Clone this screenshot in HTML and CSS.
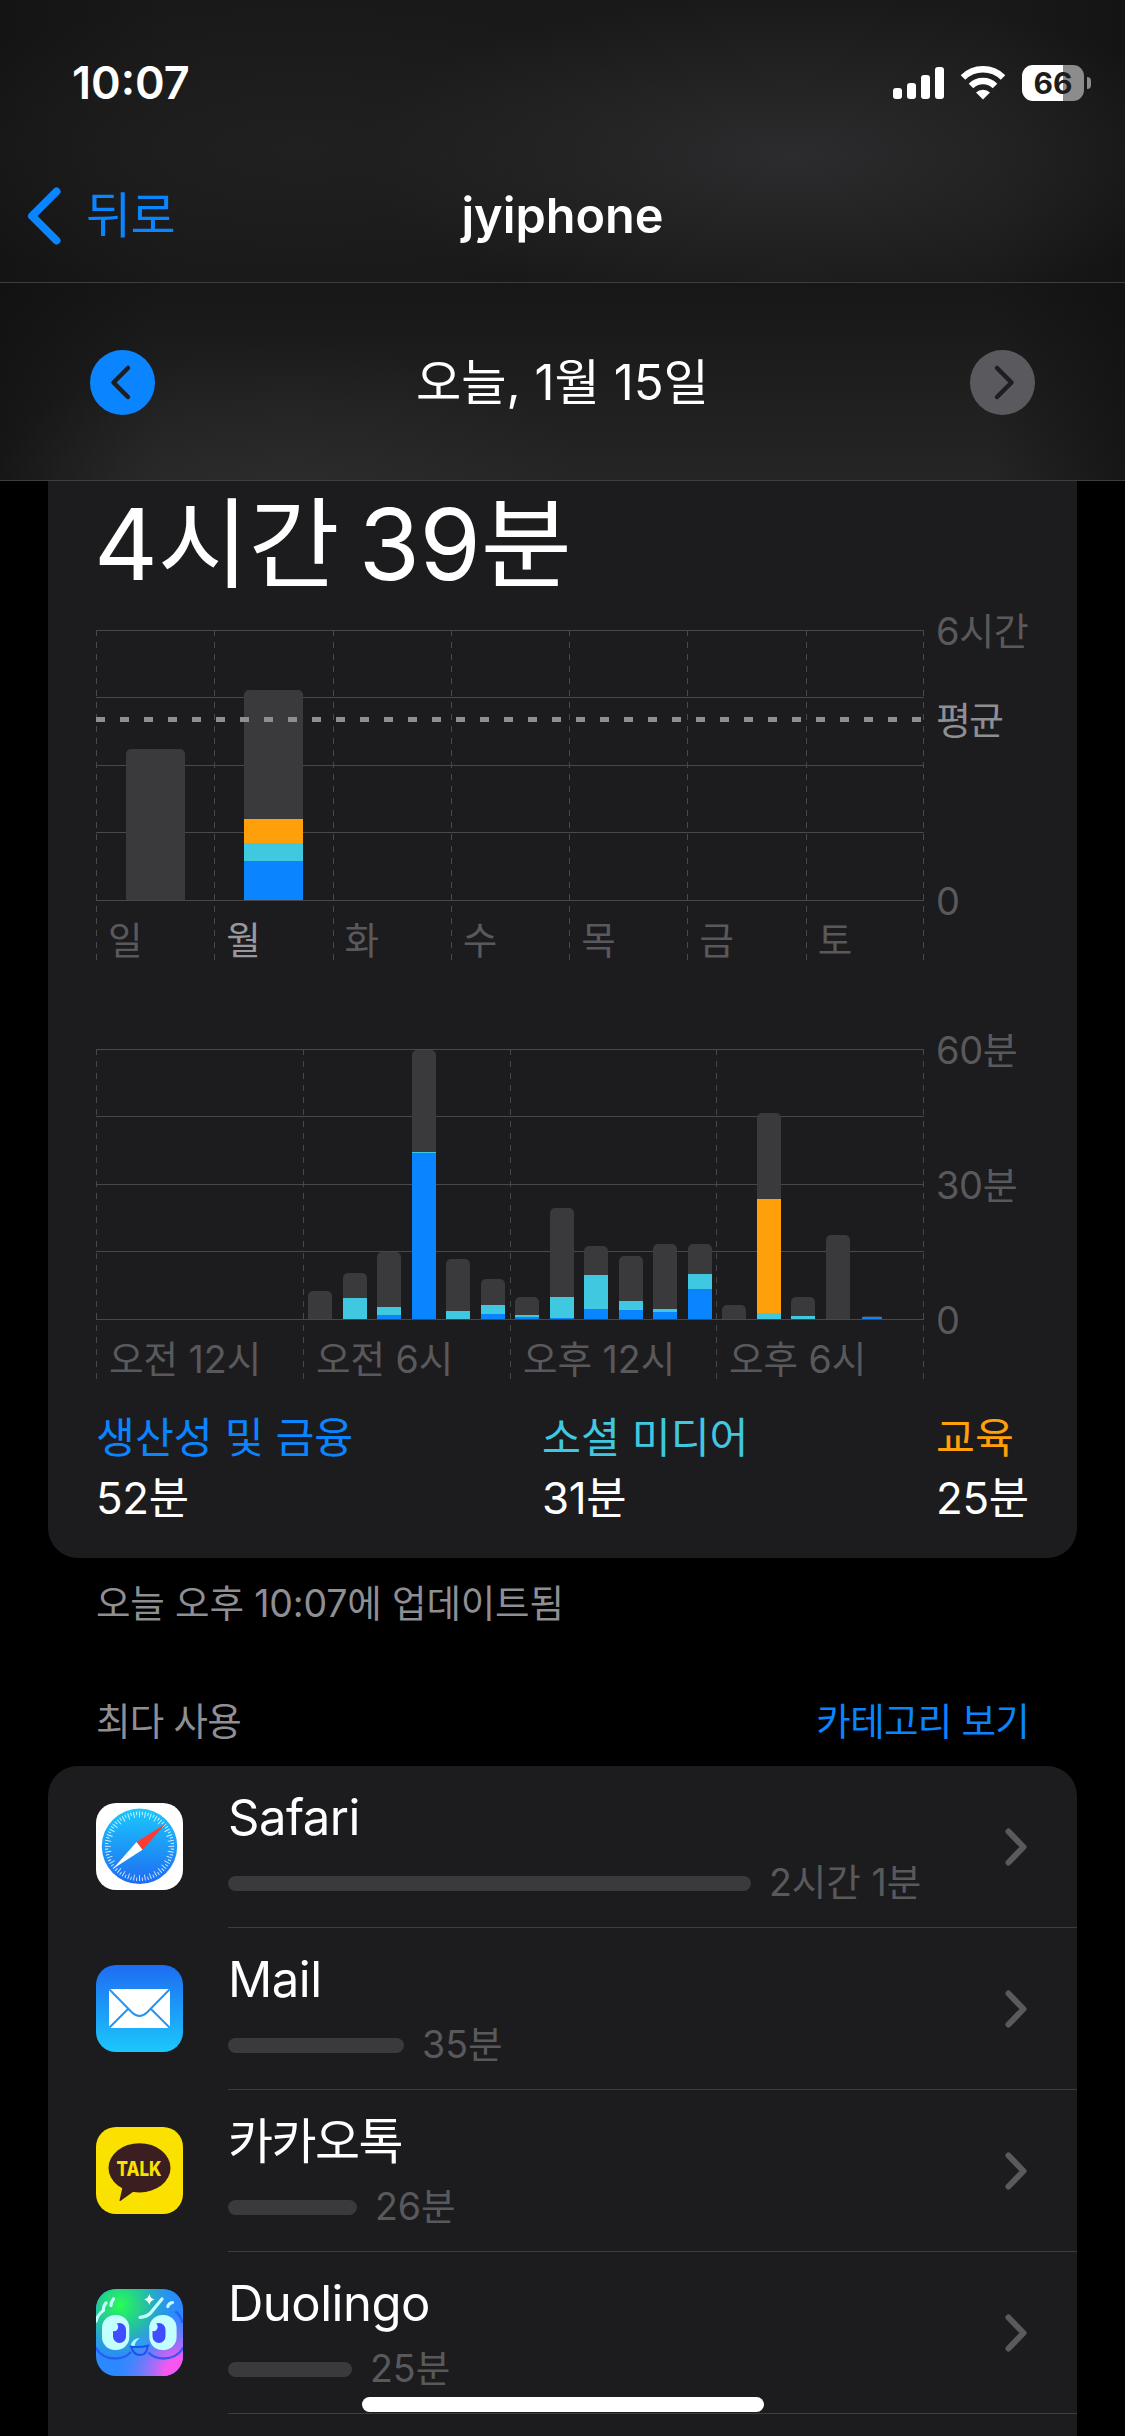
FILE: index.html
```html
<!DOCTYPE html>
<html lang="ko">
<head>
    <meta charset="UTF-8">
    <meta name="viewport" content="width=device-width, initial-scale=1.0">
    <title>jyiphone</title>
    <link rel="stylesheet" href="styles.css">
</head>
<body>
    <header class="top-bar">
        <div class="status-bar">
            <span class="time">10:07</span>
            <div class="status-icons">
                <div class="signal"><i></i><i></i><i></i><i></i></div>
                <svg class="wifi" width="46" height="34" viewBox="0 0 46 34" fill="none" stroke="#fff">
                    <path d="M3 11.5a28.5 28.5 0 0 1 40 0" stroke-width="6.5"/>
                    <path d="M11 20a17.2 17.2 0 0 1 24 0" stroke-width="6.5"/>
                    <path d="M23 33.5l-7-7a10 10 0 0 1 14 0z" fill="#fff" stroke="none"/>
                </svg>
                <div class="battery">66</div>
            </div>
        </div>
        <nav class="nav">
            <a class="back">
                <svg width="36" height="60" viewBox="0 0 36 60"><path d="M29.500 5.500L5 30l24.500 24.500"/></svg>
                <span>뒤로</span>
            </a>
            <h1>jyiphone</h1>
        </nav>
    </header>

    <div class="date-bar">
        <button class="arrow prev"><svg width="65" height="65" viewBox="0 0 65 65"><path d="M38 18L23.500 32.500L38 47"/></svg></button>
        <span>오늘, 1월 15일</span>
        <button class="arrow next"><svg width="65" height="65" viewBox="0 0 65 65"><path d="M27 18L41.500 32.500L27 47"/></svg></button>
    </div>

    <main>
        <section class="card usage">
            <h2>4시간 39분</h2>

            <div class="chart week">
                <div class="plot">
                    <div class="columns">
                        <span>일</span><span class="today">월</span><span>화</span><span>수</span><span>목</span><span>금</span><span>토</span>
                    </div>
                    <div class="bars" id="week-bars"></div>
                    <div class="average"></div>
                </div>
                <div class="y-axis"><span>6시간</span><span class="avg-label">평균</span><span>0</span></div>
            </div>

            <div class="chart day">
                <div class="plot">
                    <div class="columns">
                        <span>오전 12시</span><span>오전 6시</span><span>오후 12시</span><span>오후 6시</span>
                    </div>
                    <div class="bars" id="day-bars"></div>
                </div>
                <div class="y-axis"><span>60분</span><span>30분</span><span>0</span></div>
            </div>

            <div class="legend">
                <div><span class="productivity">생산성 및 금융</span><b>52분</b></div>
                <div><span class="social">소셜 미디어</span><b>31분</b></div>
                <div><span class="education">교육</span><b>25분</b></div>
            </div>
        </section>
        <p class="updated">오늘 오후 10:07에 업데이트됨</p>

        <div class="list-header"><span>최다 사용</span><a>카테고리 보기</a></div>

        <section class="card app-list">
            <div class="app">
                <svg class="icon" viewBox="0 0 87 87">
                    <defs>
                        <linearGradient id="safari" x2="0" y2="1"><stop stop-color="#1bc8fc"/><stop offset="1" stop-color="#1e6cf2"/></linearGradient>
                    </defs>
                    <rect width="87" height="87" rx="20" fill="#fff"/>
                    <circle cx="43.500" cy="43.300" r="37.700" fill="url(#safari)"/>
                    <g fill="none" stroke="#fff" stroke-opacity=".85">
                        <circle cx="43.500" cy="43.300" r="31.700" stroke-width="6" pathLength="360" stroke-dasharray="1.6 8.400" stroke-dashoffset=".8"/>
                        <circle cx="43.500" cy="43.300" r="33" stroke-width="3.400" pathLength="360" stroke-dasharray="1.6 8.400" stroke-dashoffset="5.800"/>
                    </g>
                    <path d="M70 20.500L40.500 39l6 7.700z" fill="#ff3b30"/>
                    <path d="M17 65.700L40.500 39l6 7.700z" fill="#fff"/>
                </svg>
                <div class="info">
                    <div class="name">Safari</div>
                    <div class="meter"><i style="width: 523px"></i>2시간 1분</div>
                </div>
                <svg class="chevron" viewBox="0 0 22 38"><path d="M3.500 3.500L18.500 19l-15 15.500"/></svg>
            </div>
            <div class="app">
                <svg class="icon" viewBox="0 0 87 87">
                    <defs>
                        <linearGradient id="mail" x2="0" y2="1"><stop stop-color="#1e6cf2"/><stop offset="1" stop-color="#1bc8fc"/></linearGradient>
                    </defs>
                    <rect width="87" height="87" rx="20" fill="url(#mail)"/>
                    <rect x="13" y="24" width="61" height="39" rx="2" fill="#fff"/>
                    <g fill="none" stroke="#2196f7" stroke-width="2">
                        <path d="M13.500 24.500L36 47.500q7.500 7 15 0L73.500 24.500"/>
                        <path d="M13.500 62.500L32 44M73.500 62.500L55 44"/>
                    </g>
                </svg>
                <div class="info">
                    <div class="name">Mail</div>
                    <div class="meter"><i style="width: 176px"></i>35분</div>
                </div>
                <svg class="chevron" viewBox="0 0 22 38"><path d="M3.500 3.500L18.500 19l-15 15.500"/></svg>
            </div>
            <div class="app">
                <svg class="icon" viewBox="0 0 87 87">
                    <rect width="87" height="87" rx="20" fill="#fae100"/>
                    <ellipse cx="43.500" cy="40.800" rx="31" ry="24.600" fill="#3b1e20"/>
                    <path d="M27 58l-3.500 15.500q0 1 1.200.3L39 63.500z" fill="#3b1e20"/>
                    <text class="talk" x="43" y="48.800" textLength="45" lengthAdjust="spacingAndGlyphs">TALK</text>
                </svg>
                <div class="info">
                    <div class="name korean">카카오톡</div>
                    <div class="meter"><i style="width: 129px"></i>26분</div>
                </div>
                <svg class="chevron" viewBox="0 0 22 38"><path d="M3.500 3.500L18.500 19l-15 15.500"/></svg>
            </div>
            <div class="app">
                <svg class="icon" viewBox="0 0 87 87">
                    <defs>
                        <clipPath id="duo-clip"><rect width="87" height="87" rx="20"/></clipPath>
                        <radialGradient id="duo-green" gradientUnits="userSpaceOnUse" cx="24" cy="16" r="62"><stop stop-color="#26ff50"/><stop offset=".45" stop-color="#24c894" stop-opacity=".85"/><stop offset="1" stop-color="#2490ff" stop-opacity="0"/></radialGradient>
                        <radialGradient id="duo-pink" gradientUnits="userSpaceOnUse" cx="84" cy="84" r="62"><stop stop-color="#ff52ee"/><stop offset=".25" stop-color="#f458f0"/><stop offset="1" stop-color="#6a80ff" stop-opacity="0"/></radialGradient>
                    </defs>
                    <g clip-path="url(#duo-clip)" fill="none" stroke-linecap="round" stroke-linejoin="round">
                        <rect width="87" height="87" fill="#2c88ff"/>
                        <rect width="87" height="87" fill="url(#duo-pink)"/>
                        <rect width="87" height="87" fill="url(#duo-green)"/>
                        <g stroke="#c4ffff" stroke-width="3.200">
                            <path d="M10 14q-3 3-2.500 7.500Q2 25 0 32M17.500 10q-2.500 3-2.500 6.500"/>
                            <path d="M66 10L54.500 24q-4 4-10.500 4.300M76.500 13.500q-3.500.5-4.700 4"/>
                        </g>
                        <path d="M53.300 5q1 4.500 5.200 5.500-4.200 1-5.200 5.500-1-4.500-5.200-5.500 4.200-1 5.200-5.500z" fill="#fff"/>
                        <path d="M80 23q5 4 6 10" stroke="#2a62f5" stroke-width="2.500"/>
                        <path d="M0 59q6 10.500 19 10.500 10 0 15.500-6M53 64q5 5.500 15 5.500 13-.5 19-10.500" stroke="#2a5cf5" stroke-width="2.300"/>
                        <rect x="6" y="26" width="27.300" height="35" rx="13" fill="#c4ffff"/>
                        <rect x="53.300" y="26" width="27.300" height="35" rx="13" fill="#c4ffff"/>
                        <rect x="17" y="34" width="13" height="20" rx="6.500" fill="#3f4dff"/>
                        <rect x="56.500" y="34" width="13" height="20" rx="6.500" fill="#3f4dff"/>
                        <circle cx="18" cy="38" r="4.200" fill="#c4ffff"/>
                        <circle cx="57.500" cy="38" r="4.200" fill="#c4ffff"/>
                        <path d="M34.500 57q2-8 9.500-8 6 .5 8.500 7.500-9 2-18 .5z" fill="#2aa0f5"/>
                        <path d="M34.500 57q2-8 9.500-8-5 3-5.500 8.500z" fill="#a8fbff"/>
                        <path d="M34.500 57.500q9 1.500 18-1M35.500 58.500q2 7.500 8.500 7.500t7.500-8" stroke="#1c50f0" stroke-width="2"/>
                    </g>
                </svg>
                <div class="info">
                    <div class="name">Duolingo</div>
                    <div class="meter"><i style="width: 124px"></i>25분</div>
                </div>
                <svg class="chevron" viewBox="0 0 22 38"><path d="M3.500 3.500L18.500 19l-15 15.500"/></svg>
            </div>
        </section>
    </main>
    <div class="home-indicator"></div>

    <script>
        // Each bar is [other, education, social, productivity] in px
        const week = [[151, 0, 0, 0], [129, 24, 18, 39], [], [], [], [], []];

        const day = [
            [], [], [], [], [], [],
            [28, 0, 0, 0], [25, 0, 21, 0], [55, 0, 8, 4], [102, 0, 1, 166], [52, 0, 8, 0], [26, 0, 9, 5],
            [18, 0, 2, 2], [89, 0, 21, 1], [29, 0, 34, 10], [45, 0, 9, 9], [65, 0, 3, 7], [30, 0, 15, 30],
            [14, 0, 0, 0], [86, 114, 6, 0], [19, 0, 3, 0], [84, 0, 0, 0], [1, 0, 0, 2], []
        ];

        const types = ['other', 'education', 'social', 'productivity'];

        const drawBars = (id, data) => {
            document.getElementById(id).innerHTML = data.map(bar => {
                const total = bar.reduce((a, b) => a + b, 0);
                const parts = bar.map((h, i) => h ? `<i class="${types[i]}" style="height: ${h}px"></i>` : '').join('');
                return `<div class="slot"><div class="bar${total && total < 5 ? ' tiny' : ''}">${parts}</div></div>`;
            }).join('');
        };

        drawBars('week-bars', week);
        drawBars('day-bars', day);
    </script>
</body>
</html>
```
FILE: styles.css
```css
* {
    margin: 0;
    padding: 0;
    box-sizing: border-box;
}

body {
    width: 1125px;
    height: 2436px;
    overflow: hidden;
    position: relative;
    background: #000;
    color: #fff;
    font-family: Inter, "Noto Sans CJK KR", sans-serif;
    font-size: 37.5px;
}

h1, h2, b {
    font-weight: 400;
}

/* Header */
.top-bar {
    height: 283px;
    border-bottom: 1px solid #3e3e40;
    background:
        radial-gradient(ellipse 430px 160px at 790px 155px, #2c2c2e, rgba(44, 44, 46, 0)),
        radial-gradient(ellipse 420px 150px at 300px 150px, #202020, rgba(32, 32, 32, 0)),
        linear-gradient(to right, #141414, #191919 15%, #191919 88%, #141414);
}

.status-bar {
    height: 165px;
    padding: 0 34px 0 72px;
    display: flex;
    justify-content: space-between;
    align-items: center;
}

.time {
    font-size: 45px;
    font-weight: 600;
    line-height: 54px;
}

.status-icons {
    display: flex;
    align-items: center;
    gap: 16px;
}

.signal {
    display: flex;
    align-items: flex-end;
    gap: 5px;
    height: 32px;
}

.signal i {
    width: 9px;
    border-radius: 3px;
    background: #fff;
}

.signal i:nth-child(1) { height: 11px; }
.signal i:nth-child(2) { height: 16px; }
.signal i:nth-child(3) { height: 24px; }
.signal i:nth-child(4) { height: 32px; }

.battery {
    position: relative;
    width: 62px;
    height: 36px;
    margin-right: 7px;
    border-radius: 11px;
    background: linear-gradient(to right, #fff 41px, #8c8c8c 41px);
    color: #1c1c1c;
    font-size: 30px;
    font-weight: 700;
    line-height: 37px;
    text-align: center;
}

.battery::after {
    content: "";
    position: absolute;
    left: 65px;
    top: 12px;
    width: 4px;
    height: 12px;
    border-radius: 0 4px 4px 0;
    background: #8c8c8c;
}

.nav {
    height: 102px;
    padding: 0 27px;
    display: grid;
    grid-template-columns: 1fr auto 1fr;
    align-items: center;
}

.nav h1 {
    font-size: 48.6px;
    font-weight: 600;
    line-height: 60px;
}

.back {
    display: flex;
    align-items: center;
    gap: 23px;
    color: #0a84ff;
    font-size: 49px;
    line-height: 60px;
    letter-spacing: -0.5px;
}

.back path {
    fill: none;
    stroke: #0a84ff;
    stroke-width: 8;
    stroke-linecap: round;
    stroke-linejoin: round;
}

.date-bar {
    height: 198px;
    padding: 1px 90px 0;
    display: flex;
    justify-content: space-between;
    align-items: center;
    border-bottom: 1px solid #3e3e40;
    font-size: 49.2px;
    line-height: 60px;
    background:
        radial-gradient(ellipse 300px 150px at 290px 210px, rgba(48, 48, 50, .6), rgba(44, 44, 46, 0)),
        linear-gradient(to right, rgba(16, 16, 16, .7), rgba(20, 20, 20, 0) 14%, rgba(20, 20, 20, 0) 88%, rgba(16, 16, 16, .7)),
        linear-gradient(#171717, #252525);
}

.arrow {
    width: 65px;
    height: 65px;
    border: none;
    border-radius: 50%;
}

.arrow svg {
    display: block;
}

.arrow path {
    fill: none;
    stroke: #1c1e22;
    stroke-width: 4.5;
    stroke-linecap: round;
    stroke-linejoin: round;
}

.prev { background: #0a84ff; }
.next { background: #5a5a5e; }

main {
    padding: 0 48px;
}

.card {
    background: #1c1c1e;
    border-radius: 30px;
}

/* Usage charts */
.usage {
    height: 1077px;
    padding: 0 48px 30px;
    border-radius: 0 0 30px 30px;
}

.usage h2 {
    height: 149px;
    font-size: 99px;
    line-height: 127px;
    letter-spacing: -0.3px;
    word-spacing: -8px;
    margin-left: -2px;
}

.chart {
    display: grid;
    grid-template-columns: 828px 1fr;
}

.day {
    margin-top: 89px;
}

.plot {
    position: relative;
    display: grid;
    height: 330px;
    background:
        linear-gradient(#48484a, #48484a) 0 0 / 100% 1px,
        linear-gradient(#48484a, #48484a) 0 67px / 100% 1px,
        linear-gradient(#48484a, #48484a) 0 135px / 100% 1px,
        linear-gradient(#48484a, #48484a) 0 202px / 100% 1px,
        linear-gradient(#48484a, #48484a) 0 270px / 100% 1px;
    background-repeat: no-repeat;
}

.columns, .bars {
    grid-area: 1 / 1;
    display: grid;
    grid-auto-flow: column;
    grid-auto-columns: 1fr;
}

.day .columns {
    grid-template-columns: 207px 207px 206px 208px;
}

.columns span {
    padding: 290px 0 0 13px;
    line-height: 40px;
    height: 330px;
    padding-top: 290px;
    color: #59595c;
    background: repeating-linear-gradient(#48484a 0 6px, transparent 6px 12px) 0 0 / 1px 100% no-repeat;
}

.columns span:last-child {
    background:
        repeating-linear-gradient(#48484a 0 6px, transparent 6px 12px) 0 0 / 1px 100% no-repeat,
        repeating-linear-gradient(#48484a 0 6px, transparent 6px 12px) 100% 0 / 1px 100% no-repeat;
}

.week .columns span {
    padding-left: 12px;
}

.columns .today {
    color: #98989d;
}

.columns span {
    line-height: 42px;
}

.bars {
    height: 270px;
}

.slot {
    display: flex;
    align-items: flex-end;
}

.bar {
    width: 24px;
    margin-left: 5px;
    border-radius: 5px 5px 0 0;
    overflow: hidden;
}

.week .bar {
    width: 59px;
    margin-left: 30px;
}

.bar.tiny {
    width: 20px;
    margin-left: 7px;
    border-radius: 2px 2px 0 0;
}

.bar i {
    display: block;
}

.bar .other { background: #3a3a3c; }
.bar .education { background: #ff9f0a; }
.bar .social { background: #40c8e0; }
.bar .productivity { background: #0a84ff; }

.average {
    position: absolute;
    top: 87px;
    left: 0;
    width: 100%;
    height: 4.5px;
    background: repeating-linear-gradient(to right, #8e8e93 0 9px, transparent 9px 24px);
}

.y-axis {
    display: grid;
    grid-template-rows: 135px 135px 0;
    padding: 1px 0 0 12px;
    font-size: 38px;
    line-height: 0;
    letter-spacing: -0.4px;
    color: #59595c;
    white-space: nowrap;
}

.week .y-axis {
    grid-template-rows: 89px 181px 0;
}

.y-axis .avg-label {
    color: #8e8e93;
    letter-spacing: -2px;
}

.legend {
    display: grid;
    grid-template-columns: 446px 394px auto;
    margin-top: 29px;
    line-height: 60px;
    font-size: 42.3px;
    white-space: nowrap;
}

.legend span, .legend b {
    display: block;
}

.legend b {
    font-size: 43.8px;
    line-height: 62px;
    letter-spacing: -0.3px;
}

.legend .productivity { color: #0a84ff; }
.legend .social { color: #40c8e0; }
.legend .education { color: #ff9f0a; }

.updated, .list-header {
    padding: 0 48px;
    line-height: 50px;
    color: #8e8e93;
}

.updated {
    margin-top: 21px;
    letter-spacing: -0.15px;
}

.list-header {
    display: flex;
    justify-content: space-between;
    margin: 68px 0 19px;
    letter-spacing: -0.7px;
}

.list-header a {
    color: #0a84ff;
}

/* Most used apps */
.app-list {
    height: 720px;
}

.app {
    display: flex;
    align-items: center;
    height: 162px;
    padding-right: 50px;
    background: linear-gradient(#3d3d41, #3d3d41) 180px 161px / 100% 1px no-repeat;
}

.icon {
    width: 87px;
    height: 87px;
    margin: 0 45px 1px 48px;
}

.talk {
    fill: #fae100;
    font-size: 20.5px;
    font-weight: 800;
    text-anchor: middle;
}

.info {
    flex: 1;
    height: 162px;
    padding-top: 22px;
}

.name {
    font-size: 49px;
    line-height: 60px;
    letter-spacing: -0.5px;
}

.name.korean {
    letter-spacing: -1.6px;
}

.meter {
    display: flex;
    align-items: center;
    gap: 18px;
    line-height: 70px;
    color: #59595c;
}

.meter i {
    height: 15px;
    border-radius: 8px;
    background: #3a3a3c;
}

.chevron {
    width: 22px;
    height: 38px;
}

.chevron path {
    fill: none;
    stroke: #5a5a5e;
    stroke-width: 6;
    stroke-linecap: round;
    stroke-linejoin: round;
}

.home-indicator {
    position: absolute;
    left: 362px;
    top: 2397px;
    width: 402px;
    height: 15px;
    border-radius: 8px;
    background: #fff;
}
```
